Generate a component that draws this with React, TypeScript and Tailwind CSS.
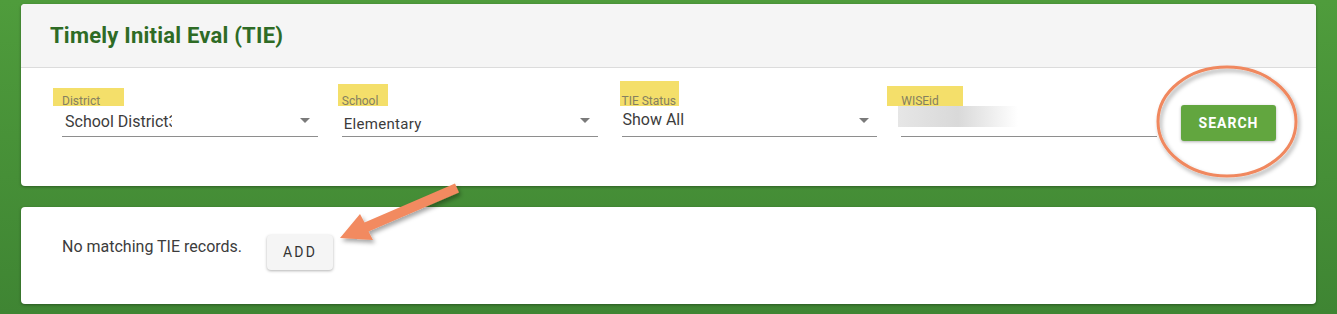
import React from "react"

interface FieldProps {
  label: string
  value?: string
  hl: { left: number; top: number; width: number }
  valueClass?: string
  select?: boolean
  blurred?: boolean
}

const Caret = () => (
  <svg width="10" height="5" viewBox="0 0 10 5" className="absolute right-[8px] top-[13px]">
    <path d="M0 0 L10 0 L5 5 Z" fill="#7a7a7a" />
  </svg>
)

const Field: React.FC<FieldProps> = ({ label, value, hl, valueClass, select, blurred }) => (
  <div className="flex-1 flex flex-col">
    <div className="relative h-[17px]">
      <span
        className="absolute bg-[#f4df6a]"
        style={{ left: hl.left, top: hl.top, width: hl.width, bottom: -1 }}
      />
      <span className="relative text-[12px] leading-[17px] text-[#858060]">{label}</span>
    </div>
    <div className="relative h-[32px] border-b border-[#8e8e8e]">
      {value && <div className={valueClass}>{value}</div>}
      {blurred && (
        <div className="absolute left-[-3px] top-[1px] h-[21px] w-[120px] bg-gradient-to-r from-[#e6e6e6] via-[#d9d9d9] to-white" />
      )}
      {select && <Caret />}
    </div>
  </div>
)

export default function App() {
  return (
    <div
      className="relative w-full h-[314px] overflow-hidden bg-gradient-to-b from-[#4f9c3c] to-[#3f8533] px-[21px] pt-[4px] flex flex-col gap-[21px]"
      style={{ fontFamily: "Roboto, 'Liberation Sans', sans-serif" }}
    >
      <div className="h-[182px] bg-white rounded-[4px] shadow-[0_1px_3px_rgba(0,0,0,0.35)] overflow-hidden flex flex-col">
        <div className="h-[64px] bg-[#f5f5f5] border-b border-[#dcdcdc] flex items-center px-[29px]">
          <h1 className="text-[22px] font-bold tracking-[0.01em] text-[#2e6b25] mb-[1px]">
            Timely Initial Eval (TIE)
          </h1>
        </div>
        <div className="flex items-start gap-[24px] pl-[41px] pr-[40px] pt-[20px]">
          <Field
            label="District"
            hl={{ left: -9, top: 0, width: 71 }}
            select
            value="School District3"
            valueClass="ml-[3px] mt-[5px] w-[107px] overflow-hidden whitespace-nowrap text-[16px] text-[#3c3c3c]"
          />
          <Field
            label="School"
            hl={{ left: -4, top: -4, width: 50 }}
            select
            value="Elementary"
            valueClass="ml-[2px] mt-[8px] text-[15px] tracking-[0.02em] text-[#3c3c3c]"
          />
          <Field
            label="TIE Status"
            hl={{ left: -2, top: -7, width: 59 }}
            select
            value="Show All"
            valueClass="ml-[1px] mt-[3px] text-[16px] text-[#3c3c3c]"
          />
          <Field label="WISEid" hl={{ left: -14, top: -2, width: 76 }} blurred />
          <button className="mt-[17px] w-[95px] h-[36px] bg-[#62a63f] rounded-[3px] shadow-[0_1px_3px_rgba(0,0,0,0.3)] text-white text-[14px] font-bold tracking-[0.07em]">
            SEARCH
          </button>
        </div>
      </div>

      <div className="h-[97px] bg-white rounded-[4px] shadow-[0_1px_3px_rgba(0,0,0,0.35)] flex items-start gap-[25px] pl-[41px] pt-[28px]">
        <span className="mt-[1px] text-[16px] leading-[22px] text-[#3c3c3c]">No matching TIE records.</span>
        <button className="w-[66px] h-[35px] bg-[#f5f5f5] rounded-[4px] shadow-[0_1px_3px_rgba(0,0,0,0.3)] text-[14px] font-normal tracking-[0.16em] text-[#333]">
          ADD
        </button>
      </div>

      <svg className="absolute inset-0 pointer-events-none" width="1337" height="314">
        <defs>
          <filter id="sh" x="-20%" y="-20%" width="140%" height="140%">
            <feDropShadow dx="2" dy="3" stdDeviation="2" floodColor="#000" floodOpacity="0.35" />
          </filter>
        </defs>
        <ellipse cx="1227" cy="121.5" rx="69" ry="54.5" fill="none" stroke="#f0885e" strokeWidth="3" filter="url(#sh)" />
        <polygon
          points="340,238 360,214 364.5,222.4 455,183.4 459,192.6 368.5,231.6 373,240"
          fill="#f28a60"
          filter="url(#sh)"
        />
      </svg>
    </div>
  )
}
